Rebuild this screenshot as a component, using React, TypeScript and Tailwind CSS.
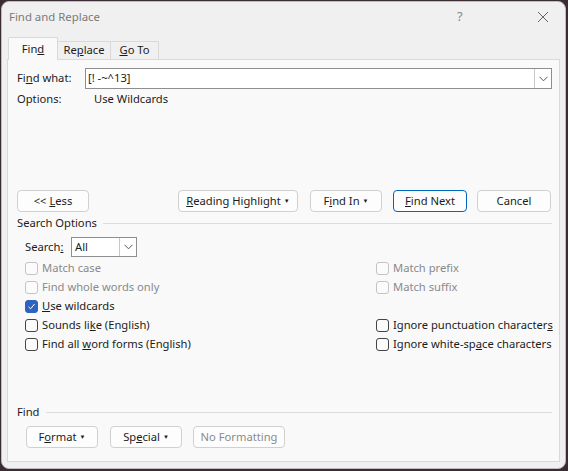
import React from 'react';

const Caret = () => <span className="ml-[3px] inline-block text-[6px] leading-none align-middle">▼</span>;

const Btn: React.FC<{ w: string; children: React.ReactNode; primary?: boolean; disabled?: boolean }> = ({ w, children, primary, disabled }) => (
    <div
        className={`${w} h-[22px] shrink-0 flex items-center justify-center rounded-[4px] border whitespace-nowrap ${
            primary ? 'border-[#0067c0] bg-[#fdfdfd]' : 'border-[#d0d0d0] bg-[#fdfdfd]'
        } ${disabled ? 'text-[#8a8a8a] bg-[#f9f9f9]' : 'text-[#1b1b1b]'}`}
    >
        {children}
    </div>
);

const Check: React.FC<{ label: React.ReactNode; checked?: boolean; disabled?: boolean }> = ({ label, checked, disabled }) => (
    <div className="h-[19px] flex items-center gap-[4px] whitespace-nowrap">
        <div
            className={`w-[13px] h-[13px] shrink-0 rounded-[3px] border flex items-center justify-center ${
                checked ? 'bg-[#2c63c0] border-[#2c63c0]' : disabled ? 'border-[#c4c4c4] bg-[#fbfbfb]' : 'border-[#444] bg-[#fbfbfb]'
            }`}
        >
            {checked && (
                <svg width="9" height="9" viewBox="0 0 9 9">
                    <path d="M1.5 4.8 L3.6 6.8 L7.6 2" stroke="white" strokeWidth="1" fill="none" />
                </svg>
            )}
        </div>
        <span className={disabled ? 'text-[#8a8a8a]' : 'text-[#1b1b1b]'}>{label}</span>
    </div>
);

const Chevron = () => (
    <svg width="9" height="6" viewBox="0 0 9 6">
        <path d="M0.5 0.8 L4.5 4.8 L8.5 0.8" stroke="#555" strokeWidth="1" fill="none" />
    </svg>
);

export default function App() {
    return (
        <div className="w-[568px] h-[471px] bg-[#3b2c33] pt-px pl-px font-['Noto_Sans',sans-serif] text-[11.2px]">
            <div className="w-[565px] h-[468px] rounded-[8px] bg-[#f0f0f0] border border-[#bdbdbd] flex flex-col overflow-hidden">
                {/* title bar */}
                <div className="h-[29px] flex items-center pl-[7px] shrink-0">
                    <span className="text-[11.4px] text-[#7a7a7a] flex-1">Find and Replace</span>
                    <span className="text-[13px] text-[#888] w-[20px] mr-[60px]">?</span>
                    <svg width="12" height="12" viewBox="0 0 12 12" className="mr-[16px]">
                        <path d="M1 1 L11 11 M11 1 L1 11" stroke="#666" strokeWidth="1" />
                    </svg>
                </div>

                {/* tabs */}
                <div className="h-[29px] flex items-end pl-[6px] shrink-0 relative z-10 -mb-px text-[#1b1b1b]">
                    <div className="w-[50px] h-[23px] border border-b-0 border-[#d9d9d9] bg-[#f9f9f9] rounded-t-[2px] flex items-center justify-center">
                        <span>Fin<u>d</u></span>
                    </div>
                    <div className="w-[53px] h-[19px] border border-l-0 border-[#d9d9d9] bg-[#f0f0f0] flex items-center justify-center">
                        <span>Re<u>p</u>lace</span>
                    </div>
                    <div className="w-[48px] h-[19px] border border-l-0 border-[#d9d9d9] bg-[#f0f0f0] flex items-center justify-center">
                        <span><u>G</u>o To</span>
                    </div>
                </div>

                {/* panel */}
                <div className="mx-[5px] mb-[6px] flex-1 border border-[#d9d9d9] bg-[#f9f9f9] pl-[9px] pr-[7px] pt-[8px] text-[#1b1b1b]">
                    <div className="flex items-center h-[21px]">
                        <span className="w-[68px]">Fi<u>n</u>d what:</span>
                        <div className="flex-1 h-[21px] bg-white border border-[#8e8e8e] flex items-center">
                            <span className="flex-1 pl-[2px]">[! -~^13]</span>
                            <div className="w-[17px] h-full border-l border-[#c8c8c8] flex items-center justify-center">
                                <Chevron />
                            </div>
                        </div>
                    </div>
                    <div className="flex items-center h-[20px]">
                        <span className="w-[77px]">Options:</span>
                        <span>Use Wildcards</span>
                    </div>

                    <div className="flex items-center mt-[81px] h-[22px]">
                        <Btn w="w-[72px]">
                            <span>&lt;&lt; <u>L</u>ess</span>
                        </Btn>
                        <div className="w-[89px]" />
                        <Btn w="w-[120px]">
                            <span><u>R</u>eading Highlight</span>
                            <Caret />
                        </Btn>
                        <div className="w-[12px]" />
                        <Btn w="w-[72px]">
                            <span>F<u>i</u>nd In</span>
                            <Caret />
                        </Btn>
                        <div className="w-[11px]" />
                        <Btn w="w-[74px]" primary>
                            <span><u>F</u>ind Next</span>
                        </Btn>
                        <div className="w-[10px]" />
                        <Btn w="w-[74px]">
                            <span>Cancel</span>
                        </Btn>
                    </div>

                    <div className="flex items-center gap-[6px] h-[20px] mt-[1px]">
                        <span>Search Options</span>
                        <div className="flex-1 h-px bg-[#dcdcdc]" />
                    </div>

                    <div className="pl-[8px]">
                        <div className="flex items-center h-[20px] mt-[4px]">
                            <span className="w-[46px]">
                                Search<u>:</u>
                            </span>
                            <div className="w-[66px] h-[20px] bg-white border border-[#8e8e8e] flex items-center">
                                <span className="flex-1 pl-[3px]">All</span>
                                <div className="w-[17px] h-full border-l border-[#c8c8c8] flex items-center justify-center">
                                    <Chevron />
                                </div>
                            </div>
                        </div>
                        <div className="flex mt-[2px]">
                            <div className="w-[351px] shrink-0 flex flex-col">
                                <Check label="Match case" disabled />
                                <Check label="Find whole words only" disabled />
                                <Check label={<><u>U</u>se wildcards</>} checked />
                                <Check label={<>Sounds li<u>k</u>e (English)</>} />
                                <Check label={<>Find all <u>w</u>ord forms (English)</>} />
                            </div>
                            <div className="flex flex-col">
                                <Check label="Match prefix" disabled />
                                <Check label="Match suffix" disabled />
                                <div className="h-[19px]" />
                                <Check label={<>Ignore punctuation character<u>s</u></>} />
                                <Check label={<>Ignore white-sp<u>a</u>ce characters</>} />
                            </div>
                        </div>
                    </div>

                    <div className="flex items-center gap-[6px] h-[20px] mt-[48px]">
                        <span>Find</span>
                        <div className="flex-1 h-px bg-[#dcdcdc]" />
                    </div>
                    <div className="flex items-center pl-[9px] mt-[4px]">
                        <Btn w="w-[72px]">
                            <span>F<u>o</u>rmat</span>
                            <Caret />
                        </Btn>
                        <div className="w-[12px]" />
                        <Btn w="w-[72px]">
                            <span>Sp<u>e</u>cial</span>
                            <Caret />
                        </Btn>
                        <div className="w-[11px]" />
                        <Btn w="w-[92px]" disabled>
                            <span>No Formatting</span>
                        </Btn>
                    </div>
                </div>
            </div>
        </div>
    );
}
